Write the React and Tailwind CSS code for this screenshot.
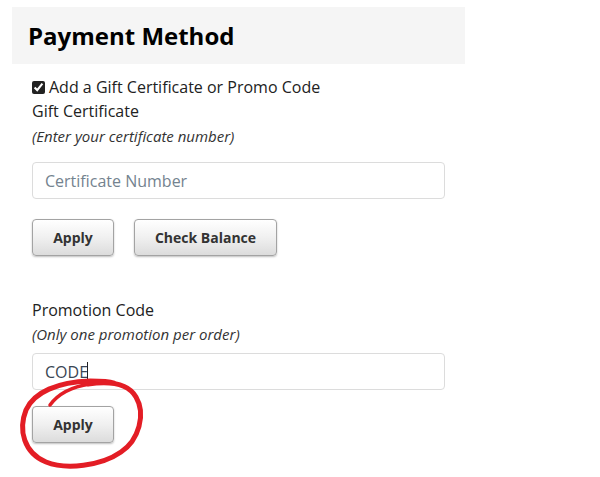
const font = { fontFamily: '"Open Sans", "Liberation Sans", sans-serif' }

function GrayButton({ children, width }) {
  return (
    <button
      type="button"
      className={`h-[37px] ${width} rounded-[4px] border border-[#a3a3a3] bg-gradient-to-b from-[#ffffff] via-[#f0f0f0] to-[#dcdcdc] text-[14px] font-bold text-[#333] shadow-[0_1px_2px_rgba(0,0,0,0.25)]`}
    >
      {children}
    </button>
  )
}

function Field({ children }) {
  return (
    <div className="flex h-[37px] w-[413px] items-center rounded-[4px] border border-[#dcdcdc] bg-white pl-[12px] text-[16px]">
      {children}
    </div>
  )
}

export default function App() {
  return (
    <div className="relative h-[477px] w-[600px] bg-white text-[#222]" style={font}>
      <div className="pl-[12px] pt-[7px]">
        <div className="flex h-[57px] w-[453px] items-center bg-[#f5f5f5] pl-[16px]">
          <h1 className="text-[24px] font-bold leading-[32px] text-black">Payment Method</h1>
        </div>

        <div className="pl-[20px] pt-[11px]">
          <label className="flex items-center gap-[4px] text-[16px] leading-[24px]">
            <input type="checkbox" defaultChecked className="h-[13px] w-[13px] accent-[#222]" />
            Add a Gift Certificate or Promo Code
          </label>
          <div className="text-[16px] leading-[24px]">Gift Certificate</div>
          <div className="mt-[3px] text-[15px] italic leading-[20px] text-[#333]">(Enter your certificate number)</div>

          <div className="mt-[16px]">
            <Field>
              <span className="text-[#74838f]">Certificate Number</span>
            </Field>
          </div>

          <div className="mt-[20px] flex gap-[20px]">
            <GrayButton width="w-[82px]">Apply</GrayButton>
            <GrayButton width="w-[143px]">Check Balance</GrayButton>
          </div>

          <div className="mt-[42px] text-[16px] leading-[24px]">Promotion Code</div>
          <div className="mt-[2px] text-[15px] italic leading-[20px] text-[#333]">(Only one promotion per order)</div>

          <div className="mt-[9px]">
            <Field>
              <span className="text-[#3a4654]">CODE</span>
              <span className="-ml-[1px] h-[20px] w-px bg-[#222]" />
            </Field>
          </div>

          <div className="mt-[16px]">
            <GrayButton width="w-[82px]">Apply</GrayButton>
          </div>
        </div>
      </div>

      {/* hand-drawn red circle around the promo Apply button */}
      <svg
        className="pointer-events-none absolute left-0 top-0"
        width="600"
        height="477"
        viewBox="0 0 600 477"
        fill="none"
      >
        <path
          d="M50 405 C58 394 70 387 90 384"
          stroke="#e31d25"
          strokeWidth="3.5"
          strokeLinecap="round"
        />
        <path
          d="M88 384 C108 381 128 383 136 397 C146 414 139 440 121 452 C101 466 66 470 46 462 C24 453 18 430 26 410 C34 392 58 382 90 381 C100 381 108 381 114 383"
          stroke="#e31d25"
          strokeWidth="5"
          strokeLinecap="round"
        />
      </svg>
    </div>
  )
}
